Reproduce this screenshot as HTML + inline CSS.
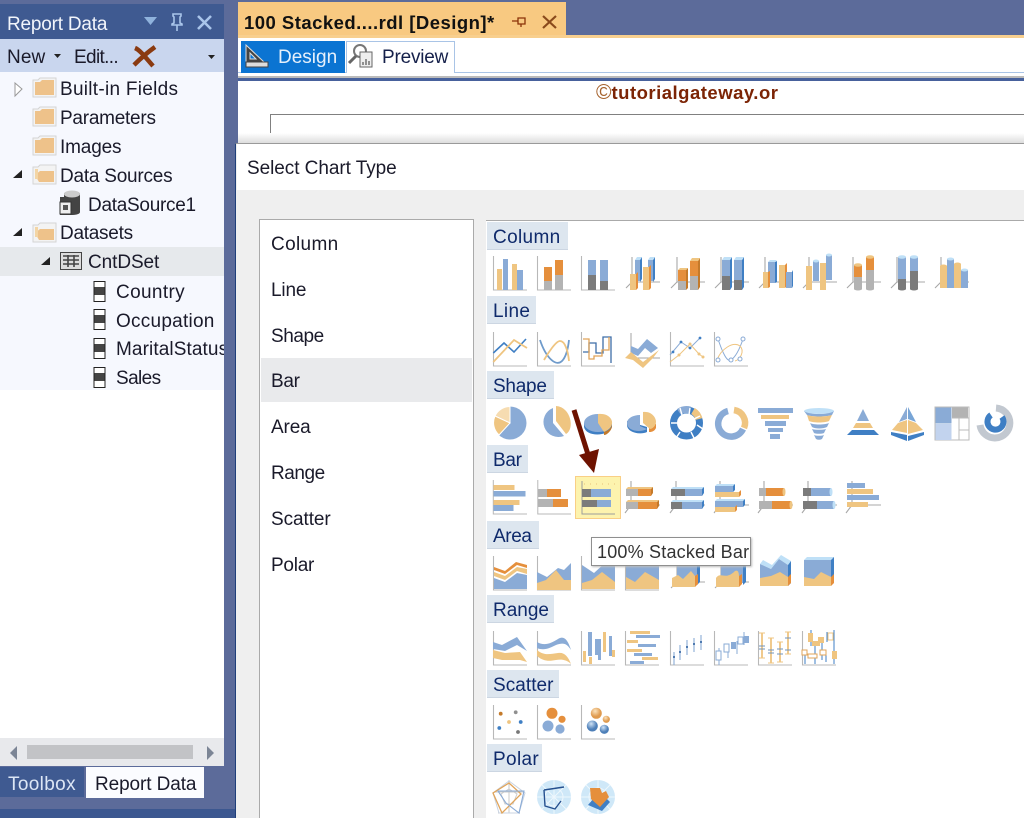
<!DOCTYPE html>
<html><head><meta charset="utf-8"><style>
html,body{margin:0;padding:0;width:1024px;height:818px;overflow:hidden;background:#5c6b9a}
body{position:relative;font-family:"Liberation Sans",sans-serif;font-size:19px;color:#1a1a2a}
.a{position:absolute}
.t{position:absolute;white-space:nowrap;line-height:24px;height:24px;letter-spacing:.35px}
.h{position:absolute;left:487px;height:28px;background:#dde6ef;color:#0f2a6b;line-height:31px;padding-left:6px;box-sizing:border-box;letter-spacing:.35px;border-bottom:1px solid #ccd6e2}
svg{position:absolute;left:0;top:0}
.o{fill:#efc581}.b{fill:#8aabd6}.O{fill:#e58f3c}.g{fill:#b3b3b3}.d{fill:#7b7b7b}.B{fill:#3f7fc4}.l{fill:#bfe0f7}.D{fill:#c47a2a}.G{fill:#8f8f8f}.k{fill:#555}
.s{fill:none}
</style></head><body>
<!-- left panel -->
<div class="a" style="left:0;top:4px;width:224px;height:35px;background:#3f5a91"></div>
<div class="a" style="left:0;top:39px;width:224px;height:33px;background:#c9d6ee"></div>
<div class="a" style="left:0;top:72px;width:224px;height:318px;background:#f6f8fe"></div>
<div class="a" style="left:0;top:390px;width:224px;height:348px;background:#fff"></div>
<div class="a" style="left:0;top:247px;width:224px;height:29px;background:#e6e9ec"></div>
<div class="a" style="left:0;top:738px;width:224px;height:28px;background:#e8e9ec"></div>
<div class="a" style="left:27px;top:745px;width:166px;height:14px;background:#c2c3c6"></div>
<div class="a" style="left:0;top:767px;width:84px;height:30px;background:#3f5a91"></div>
<div class="a" style="left:86px;top:767px;width:118px;height:31px;background:#fbfcff"></div>
<div class="a" style="left:0;top:809px;width:236px;height:9px;background:#3c5790"></div>
<div class="t" style="left:7px;top:13px;color:#f2f5fb;letter-spacing:-.2px">Report Data</div>
<div class="t" style="left:7px;top:46px;letter-spacing:.1px">New</div>
<div class="t" style="left:74px;top:46px;letter-spacing:-.65px">Edit...</div>
<div class="t" style="left:60px;top:78px;letter-spacing:.28px">Built-in Fields</div>
<div class="t" style="left:60px;top:107px;letter-spacing:-.25px">Parameters</div>
<div class="t" style="left:60px;top:136px;letter-spacing:-.15px">Images</div>
<div class="t" style="left:60px;top:165px;letter-spacing:-.23px">Data Sources</div>
<div class="t" style="left:88px;top:194px;letter-spacing:-.28px">DataSource1</div>
<div class="t" style="left:60px;top:222px;letter-spacing:-.27px">Datasets</div>
<div class="t" style="left:88px;top:251px;letter-spacing:-.08px">CntDSet</div>
<div class="t" style="left:116px;top:281px">Country</div>
<div class="t" style="left:116px;top:310px;letter-spacing:.25px">Occupation</div>
<div class="a" style="left:116px;top:338px;width:108px;height:24px;overflow:hidden"><div class="t" style="left:0;top:0;letter-spacing:.1px">MaritalStatus</div></div>
<div class="t" style="left:116px;top:367px;letter-spacing:-.6px">Sales</div>
<div class="t" style="left:8px;top:773px;color:#dce6f5">Toolbox</div>
<div class="t" style="left:95px;top:773px;letter-spacing:-.1px">Report Data</div>
<!-- doc area -->
<div class="a" style="left:238px;top:2px;width:328px;height:33px;background:#f8c981"></div>
<div class="a" style="left:238px;top:35px;width:786px;height:3px;background:#f8cf8e"></div>
<div class="a" style="left:238px;top:38px;width:786px;height:44px;background:#fff"></div>
<div class="a" style="left:238px;top:72px;width:786px;height:1px;background:#a9c4e6"></div>
<div class="a" style="left:238px;top:76px;width:786px;height:2px;background:#bbb"></div>
<div class="a" style="left:238px;top:78px;width:786px;height:3px;background:#47619c"></div>
<div class="a" style="left:238px;top:81px;width:786px;height:62px;background:#fff"></div>
<div class="a" style="left:270px;top:114px;width:754px;height:29px;box-sizing:border-box;border:1px solid #808080;border-right:0;border-bottom:0"></div>
<div class="a" style="left:238px;top:133px;width:786px;height:10px;background:linear-gradient(#fff,#ddd)"></div>
<div class="t" style="left:244px;top:11px;font-weight:bold;font-size:18.5px;color:#111;letter-spacing:.47px">100 Stacked....rdl [Design]*</div>
<div class="a" style="left:241px;top:41px;width:104px;height:32px;background:#0b74d2"></div>
<div class="a" style="left:346px;top:41px;width:109px;height:32px;box-sizing:border-box;border:1px solid #a9c4e6;border-bottom:0;background:#fff"></div>
<div class="t" style="left:278px;top:46px;color:#e6f0fb;letter-spacing:0">Design</div>
<div class="t" style="left:382px;top:46px;color:#15204a;letter-spacing:-.2px">Preview</div>
<div class="t" style="left:596px;top:81px;font-weight:bold;font-size:18.5px;color:#7c2405;letter-spacing:.5px"><span style="font-weight:normal;font-size:21px;color:#a5622d;letter-spacing:0">©</span>tutorialgateway.or</div>
<!-- dialog -->
<div class="a" style="left:235px;top:143px;width:789px;height:675px;background:#efefef;border-left:1px solid #1f3f7a;border-top:1px solid #9a9a9a;box-sizing:border-box"></div>
<div class="a" style="left:237px;top:144px;width:787px;height:46px;background:#fff"></div>
<div class="t" style="left:247px;top:157px;letter-spacing:-.06px">Select Chart Type</div>
<div class="a" style="left:259px;top:219px;width:215px;height:600px;box-sizing:border-box;background:#fff;border:1px solid #aaa"></div>
<div class="a" style="left:261px;top:358px;width:211px;height:44px;background:#e9eaec"></div>
<div class="t" style="left:271px;top:233px">Column</div>
<div class="t" style="left:271px;top:279px;letter-spacing:-.15px">Line</div>
<div class="t" style="left:271px;top:325px;letter-spacing:-.45px">Shape</div>
<div class="t" style="left:271px;top:370px;letter-spacing:-.3px">Bar</div>
<div class="t" style="left:271px;top:416px;letter-spacing:-.15px">Area</div>
<div class="t" style="left:271px;top:462px;letter-spacing:-.45px">Range</div>
<div class="t" style="left:271px;top:508px;letter-spacing:-.08px">Scatter</div>
<div class="t" style="left:271px;top:554px;letter-spacing:-.25px">Polar</div>
<div class="a" style="left:486px;top:220px;width:538px;height:598px;background:#fff;border-top:1px solid #aaa;box-sizing:border-box"></div>
<div class="h" style="top:222px;width:81px">Column</div>
<div class="h" style="top:296px;width:49px">Line</div>
<div class="h" style="top:371px;width:67px;letter-spacing:-.25px">Shape</div>
<div class="h" style="top:445px;width:41px;letter-spacing:-.3px">Bar</div>
<div class="h" style="top:521px;width:52px;letter-spacing:-.4px">Area</div>
<div class="h" style="top:595px;width:67px;letter-spacing:0">Range</div>
<div class="h" style="top:670px;width:72px;letter-spacing:.05px">Scatter</div>
<div class="h" style="top:744px;width:55px">Polar</div>
<div class="a" style="left:575px;top:476px;width:46px;height:43px;box-sizing:border-box;background:#fdf3ae;border:1px solid #f9cf86"></div>

<svg width="1024" height="818" viewBox="0 0 1024 818">
<defs>
<radialGradient id="gO" cx=".4" cy=".3"><stop offset="0" stop-color="#fbe3bd"/><stop offset="1" stop-color="#df9a4e"/></radialGradient>
<radialGradient id="gB" cx=".4" cy=".3"><stop offset="0" stop-color="#cfe2f5"/><stop offset="1" stop-color="#4d7fb8"/></radialGradient>
<path id="ax" d="M1.500 1V35H35" fill="none" stroke="#b8b8b8" stroke-width="1.100"/>
<path id="ax3" d="M8 2V27H36M8 27L2 33" fill="none" stroke="#a8a8a8" stroke-width="1.100"/>
<path id="axh" d="M7 1V25H36M7 25L1 33" fill="none" stroke="#a8a8a8" stroke-width="1.100"/>
<g id="folder"><path d="M1 3H6L8 1H24V20H1Z" fill="#f3f3f3" stroke="#d4d4d4"/><path d="M3 5H8L10 3H22V18H3Z" fill="#eec28a"/></g>
<g id="fold2"><path d="M1 3H6L8 1H24V20H1Z" fill="#f3f3f3" stroke="#d4d4d4"/><path d="M3 11L8 7H22V18H7Z" fill="#eec28a"/><path d="M3 5H6V15H3Z" fill="#f3d5a5"/></g>
<g id="fld"><rect x="0.500" y="0.500" width="11" height="20" fill="#fff" stroke="#222"/><rect x="1" y="6" width="10" height="8" fill="#444"/></g>
</defs>
<!-- left panel chrome icons -->
<path d="M144 17H157L150.500 25Z" fill="#8fb2dc"/>
<path d="M173 14H181V16L180 17V23L182 24V25H172V24L174 23V17L173 16ZM177 25V31" fill="none" stroke="#a9c5ea" stroke-width="1.600"/>
<path d="M198 16L211 29M211 16L198 29" stroke="#a9c5ea" stroke-width="2.600"/>
<path d="M54 54H61L57.500 58Z" fill="#222"/>
<path d="M208 55H215L211.500 59Z" fill="#222"/>
<path d="M135 48C140 50 146 58 153 66M155 47C148 52 141 58 134 65" stroke="#8a3a10" stroke-width="4.500" fill="none"/>
<path d="M15 83L22 89L15 96Z" fill="#fff" stroke="#999"/>
<use href="#folder" x="32" y="77"/><use href="#folder" x="32" y="106"/><use href="#folder" x="32" y="135"/><use href="#fold2" x="32" y="164"/><use href="#fold2" x="32" y="222"/>
<path d="M22 170V178H13Z" fill="#222"/><path d="M22 228V236H13Z" fill="#222"/><path d="M50 257V265H41Z" fill="#222"/>
<g><path d="M60 197H64V194C64 190 80 190 80 194V212C80 215 72 215 72 215H60Z" fill="#444"/><ellipse cx="72" cy="194" rx="8" ry="3.500" fill="#ccc"/><rect x="60" y="202" width="11" height="12" fill="#eee" stroke="#333"/><rect x="63" y="205" width="5" height="5" fill="#555"/></g>
<g><rect x="60.500" y="252.500" width="21" height="17" fill="#ddd" stroke="#444"/><path d="M63 256H79M63 260H79M63 264H79M68 255V267M74 255V267" stroke="#444" stroke-width="1.600"/></g>
<use href="#fld" x="93.500" y="281"/><use href="#fld" x="93.500" y="309"/><use href="#fld" x="93.500" y="338"/><use href="#fld" x="93.500" y="367"/>
<path d="M17 746V760L10 753Z" fill="#7c8595"/><path d="M207 746V760L214 753Z" fill="#7c8595"/>
<!-- doc tab icons -->
<path d="M512 21H518M518 18H525V24H518ZM521 24V27" fill="none" stroke="#8a3208" stroke-width="1.300"/>
<path d="M543 16L556 28M556 16L543 28" stroke="#8a4a1c" stroke-width="2.200"/>
<path d="M246 45V62H264ZM250 53V59H256Z" fill="#444" stroke="#ddd" fill-rule="evenodd"/><rect x="246" y="62" width="22" height="5" fill="#ddd" stroke="#444"/>
<circle cx="360" cy="51" r="6" fill="#fff" stroke="#777" stroke-width="2"/><path d="M356 56L349 63" stroke="#666" stroke-width="3"/><rect x="360" y="52" width="12" height="15" fill="#eee" stroke="#666"/><path d="M363 65V62M366 65V59M369 65V61" stroke="#333"/>

<!-- COLUMN ROW -->
<g transform="translate(492,255)"><use href="#ax"/><rect class="o" x="5" y="14" width="5" height="21"/><rect class="b" x="11" y="4" width="5" height="31"/><rect class="o" x="20" y="9" width="5" height="26"/><rect class="b" x="25" y="15" width="6" height="20"/></g>
<g transform="translate(536,255)"><use href="#ax"/><rect class="O" x="8" y="12" width="8" height="14"/><rect class="g" x="8" y="26" width="8" height="9"/><rect class="O" x="19" y="5" width="8" height="15"/><rect class="g" x="19" y="20" width="8" height="15"/></g>
<g transform="translate(580,255)"><use href="#ax"/><rect class="b" x="8" y="5" width="8" height="15"/><rect class="d" x="8" y="20" width="8" height="15"/><rect class="b" x="20" y="5" width="8" height="21"/><rect class="d" x="20" y="26" width="8" height="9"/></g>
<g transform="translate(624,255)"><use href="#ax3"/><rect class="b" x="11" y="5" width="5" height="21"/><path class="B" d="M16 5l2-3v22l-2 3z"/><path class="l" d="M11 5l2-3h5l-2 3z"/><rect class="b" x="24" y="5" width="5" height="21"/><path class="B" d="M29 5l2-3v22l-2 3z"/><path class="l" d="M24 5l2-3h5l-2 3z"/><rect class="o" x="6" y="19" width="6" height="16"/><path class="O" d="M12 19l2-2v16l-2 2z"/><rect class="o" x="19" y="12" width="6" height="23"/><path class="O" d="M25 12l2-2v23l-2 2z"/></g>
<g transform="translate(669,255)"><use href="#ax3"/><rect class="O" x="9" y="15" width="8" height="11"/><rect class="g" x="9" y="26" width="8" height="9"/><path class="D" d="M17 15l2-2v20l-2 2z"/><path class="o" d="M9 15l2-2h8l-2 2z"/><rect class="O" x="21" y="6" width="8" height="15"/><rect class="g" x="21" y="21" width="8" height="14"/><path class="D" d="M29 6l2-3v29l-2 3z"/><path class="o" d="M21 6l2-3h8l-2 3z"/></g>
<g transform="translate(713,255)"><use href="#ax3"/><rect class="b" x="9" y="5" width="8" height="16"/><rect class="d" x="9" y="21" width="8" height="14"/><path class="B" d="M17 5l2-3v30l-2 3z"/><path class="l" d="M9 5l2-3h8l-2 3z"/><rect class="b" x="21" y="5" width="8" height="20"/><rect class="d" x="21" y="25" width="8" height="10"/><path class="B" d="M29 5l2-3v30l-2 3z"/><path class="l" d="M21 5l2-3h8l-2 3z"/></g>
<g transform="translate(757,255)"><use href="#ax3"/><rect class="b" x="11" y="7" width="7" height="21"/><path class="B" d="M18 7l2-1v21l-2 1z"/><path class="l" d="M11 7l2-2h7l-2 2z"/><rect class="o" x="22" y="10" width="6" height="23"/><path class="O" d="M28 10l2-2v23l-2 2z"/><rect class="b" x="29" y="17" width="6" height="16"/><path class="B" d="M35 17l1-2v16l-1 2z"/><rect class="o" x="6" y="17" width="5" height="16"/><path class="O" d="M11 17l2-1v16l-2 1z"/></g>
<g transform="translate(801,255)"><use href="#ax3"/><rect class="b" x="12" y="6" width="6" height="20"/><ellipse class="l" cx="15" cy="6" rx="3" ry="1.500"/><rect class="b" x="25" y="0" width="6" height="25"/><ellipse class="l" cx="28" cy="0" rx="3" ry="1.500"/><rect class="o" x="5" y="11" width="6" height="24"/><rect class="o" x="19" y="8" width="6" height="27"/></g>
<g transform="translate(845,255)"><use href="#ax3"/><rect class="O" x="9" y="10" width="8" height="12"/><ellipse class="o" cx="13" cy="10" rx="4" ry="1.800"/><rect class="g" x="9" y="22" width="8" height="12"/><ellipse class="g" cx="13" cy="34" rx="4" ry="1.500"/><rect class="O" x="21" y="2" width="8" height="13"/><ellipse class="o" cx="25" cy="2" rx="4" ry="1.800"/><rect class="g" x="21" y="15" width="8" height="19"/><ellipse class="g" cx="25" cy="34" rx="4" ry="1.500"/></g>
<g transform="translate(889,255)"><use href="#ax3"/><rect class="b" x="9" y="2" width="8" height="22"/><ellipse class="l" cx="13" cy="2" rx="4" ry="1.800"/><rect class="d" x="9" y="24" width="8" height="10"/><ellipse class="d" cx="13" cy="34" rx="4" ry="1.500"/><rect class="b" x="21" y="2" width="8" height="14"/><ellipse class="l" cx="25" cy="2" rx="4" ry="1.800"/><rect class="d" x="21" y="16" width="8" height="18"/><ellipse class="d" cx="25" cy="34" rx="4" ry="1.500"/></g>
<g transform="translate(933,255)"><use href="#ax3"/><rect class="o" x="7" y="11" width="7" height="22"/><ellipse class="o" cx="10.500" cy="11" rx="3.500" ry="1.500"/><rect class="b" x="14" y="4" width="7" height="29"/><ellipse class="l" cx="17.500" cy="4" rx="3.500" ry="1.500"/><rect class="o" x="21" y="9" width="7" height="24"/><ellipse class="o" cx="24.500" cy="9" rx="3.500" ry="1.500"/><rect class="b" x="28" y="15" width="7" height="18"/><ellipse class="l" cx="31.500" cy="15" rx="3.500" ry="1.500"/></g>

<!-- LINE ROW -->
<g transform="translate(492,331)"><use href="#ax"/><path d="M1.300 22L12 12L22 21L34 8" fill="none" stroke="#3f7fc4" stroke-width="1.600"/><path d="M1.300 31L22 9L35 17" fill="none" stroke="#efc581" stroke-width="1.800"/></g>
<g transform="translate(536,331)"><use href="#ax"/><path d="M4 9C10 27 20 36 26 30C30 26 32 18 33 9" fill="none" stroke="#6f9bcb" stroke-width="1.800"/><path d="M8 29C12 22 20 10 24 10C29 10 32 20 33 30" fill="none" stroke="#efc581" stroke-width="1.800"/></g>
<g transform="translate(580,331)"><use href="#ax"/><path d="M3 21H9V12H16V22H23V6H31V32" fill="none" stroke="#3f6ea8" stroke-width="1.300"/><path d="M3 8H9V28H14V25H22V19H29V6" fill="none" stroke="#e0a45a" stroke-width="1.300"/></g>
<g transform="translate(624,331)"><path d="M7 2V27H36" fill="none" stroke="#a3a3a3"/><path class="b" d="M7 15L14 18L23 8L34 17L27 22L21 17L14 25L7 22Z"/><path class="o" d="M1 27L7 21L19 31L35 19L29 27L19 37L9 29Z"/></g>
<g transform="translate(669,331)"><use href="#ax"/><path d="M1 24L12 11L21 17L31 7" fill="none" stroke="#8aabd6"/><path d="M1 31L10 24L21 13L30 23L34 26" fill="none" stroke="#efc581"/><g class="B"><circle cx="12" cy="11" r="1.400"/><circle cx="21" cy="17" r="1.400"/><circle cx="31" cy="7" r="1.400"/><circle cx="4" cy="21" r="1.400"/></g><g class="o"><circle cx="10" cy="24" r="1.500"/><circle cx="21" cy="13" r="1.500"/><circle cx="30" cy="23" r="1.500"/><circle cx="34" cy="26" r="1.500"/></g></g>
<g transform="translate(713,331)"><use href="#ax"/><path d="M5 8C9 20 14 32 18 29C24 25 28 14 30 8" fill="none" stroke="#8aabd6"/><path d="M4 29C8 18 20 10 27 15C32 20 27 29 22 30" fill="none" stroke="#efc581"/><g fill="#fff" stroke="#8aabd6"><circle cx="5" cy="8" r="2"/><circle cx="30" cy="8" r="2"/><circle cx="18" cy="29" r="2"/><circle cx="5" cy="29" r="2"/><circle cx="27" cy="28" r="2"/></g></g>

<!-- SHAPE ROW -->
<g transform="translate(492,405)"><circle class="b" cx="18" cy="18" r="16.500"/><path d="M18 18L18 1.500A16.500 16.500 0 0 0 3 11Z" fill="#f6dcb1" stroke="#fff"/><path d="M18 18L3 11A16.500 16.500 0 0 0 7 30Z" class="o" stroke="#fff"/></g>
<g transform="translate(536,405)"><path class="b" d="M17 18L17 3A15 15 0 1 0 28 31Z"/><path class="o" d="M20 16V1C35 2 39 24 30 29Z"/></g>
<g transform="translate(580,405)"><path class="B" d="M4 18V22C6 32 28 32 32 22V18Z"/><ellipse class="b" cx="18" cy="18" rx="14" ry="9"/><path class="o" d="M18 18V9C28 8 33 14 32 19C31 24 26 26 24 27Z"/><path class="D" d="M24 27C28 26 32 23 32 19V22C31 26 27 30 24 30Z"/></g>
<g transform="translate(624,405)"><path class="B" d="M3 16V20C3 28 17 30 23 27V22Z"/><path class="b" d="M16 10V21L23 24C16 28 3 26 3 18C3 13 10 10 16 10Z"/><path class="O" d="M19 9V13L32 19V23C30 27 27 27 25 27V22Z"/><path class="o" d="M19 7C27 6 32 12 32 17C32 21 28 24 26 24L19 18Z"/></g>
<g transform="translate(669,405)"><circle cx="17.500" cy="18" r="13" fill="none" stroke="#3f7fc4" stroke-width="7"/><path d="M10 7A13 13 0 0 1 21 5" fill="none" stroke="#8aabd6" stroke-width="7"/><path d="M24 6A13 13 0 0 1 30 14" fill="none" stroke="#efc581" stroke-width="7"/><path d="M2 18H9M28 20L34 24M11 27L7 33M22 27L25 33M11 3L13 10M21 3L20 10M31 11L25 14" stroke="#fff" stroke-width="1.400"/></g>
<g transform="translate(713,405)"><path d="M15 6A13 13 0 1 0 30 24" fill="none" stroke="#8aabd6" stroke-width="6.500"/><path d="M21 5A13 13 0 0 1 31 23" fill="none" stroke="#efc581" stroke-width="6.500"/></g>
<g transform="translate(757,405)"><rect class="b" x="1" y="3" width="35" height="5"/><rect class="o" x="4" y="10" width="28" height="4"/><rect class="b" x="8" y="16" width="21" height="5"/><rect class="b" x="11" y="23" width="15" height="4"/><rect class="b" x="13" y="29" width="10" height="5"/></g>
<g transform="translate(801,405)"><ellipse class="l" cx="18" cy="6" rx="15" ry="3"/><path class="b" d="M3 6C8 10 28 10 33 6L31 10C26 12 10 12 6 10Z"/><path class="o" d="M6 10C10 12 26 12 31 10L28 16C24 18 12 18 8 16Z"/><path class="b" d="M9 18C12 20 24 20 28 18L26 22C22 24 14 24 11 22ZM11 24C14 25 22 25 25 24L23 28C21 29 15 29 13 28ZM13 30C15 31 21 31 23 30L21 34C19 35 17 35 15 34Z"/></g>
<g transform="translate(845,405)"><path class="b" d="M18 4L24 16H12Z"/><path class="o" d="M11 18H25L28 23H8Z"/><path class="B" d="M7 25H29L34 30H2Z"/></g>
<g transform="translate(889,405)"><path class="b" d="M18 2V14L10 17Z"/><path class="B" opacity=".7" d="M19 2L27 17L19 14Z"/><path class="o" d="M9 18L18 15V28L3 25ZM19 15L27 18L34 25L19 29Z"/><path class="B" d="M2 27L18 30V36L2 30ZM19 31L35 27V30L19 36Z"/></g>
<g transform="translate(933,405)"><rect x="2" y="2" width="34" height="33" fill="#fff" stroke="#bbb"/><rect class="b" x="2.500" y="2.500" width="16" height="16"/><rect class="g" x="19" y="2.500" width="16" height="10"/><rect x="2.500" y="19" width="16" height="16" fill="#c2d3ee"/><path d="M19 13H36M26 13V35M26 25H36" stroke="#bbb" fill="none"/></g>
<g transform="translate(977,405)"><path d="M19 3A15 15 0 1 1 3 20" fill="none" stroke="#c2c8d0" stroke-width="7"/><path d="M14 10A8 8 0 1 0 25 12" fill="none" stroke="#3f7fc4" stroke-width="6"/></g>

<!-- BAR ROW -->
<g transform="translate(492,480)"><path d="M1.300 0V34H35" fill="none" stroke="#b8b8b8"/><rect class="o" x="1.500" y="5" width="21" height="5"/><rect class="b" x="1.500" y="11" width="32" height="5.500"/><rect class="o" x="1.500" y="20" width="26" height="5"/><rect class="b" x="1.500" y="25" width="20" height="6"/></g>
<g transform="translate(536,480)"><path d="M1.800 0V34H35" fill="none" stroke="#b8b8b8"/><rect class="g" x="2" y="9" width="9" height="8"/><rect class="O" x="11" y="9" width="14" height="8"/><rect class="g" x="2" y="19" width="15" height="8"/><rect class="O" x="17" y="19" width="15" height="8"/></g>
<g transform="translate(580,480)"><path d="M2 1V34H35" fill="none" stroke="#9c9c9c"/><rect class="d" x="2" y="9" width="9" height="8"/><rect class="b" x="11" y="9" width="20" height="8"/><rect class="d" x="2" y="20" width="15" height="7"/><rect class="b" x="17" y="20" width="14" height="7"/><path d="M4 4H38" stroke="#e8c27a" stroke-dasharray="1 5"/></g>
<g transform="translate(624,480)"><use href="#axh"/><rect class="g" x="2" y="9" width="12" height="7"/><rect class="O" x="14" y="9" width="13" height="7"/><path class="o" d="M2 9l2-2h25l-2 2z"/><path class="D" d="M27 9l2-2v6l-2 3z"/><rect class="g" x="2" y="22" width="12" height="7"/><rect class="O" x="14" y="22" width="19" height="7"/><path class="o" d="M2 22l2-2h31l-2 2z"/><path class="D" d="M33 22l2-2v6l-2 3z"/></g>
<g transform="translate(669,480)"><use href="#axh"/><rect class="d" x="2" y="9" width="14" height="7"/><rect class="b" x="16" y="9" width="17" height="7"/><path class="l" d="M2 9l2-2h31l-2 2z"/><path class="B" d="M33 9l2-2v6l-2 3z"/><rect class="d" x="2" y="22" width="11" height="7"/><rect class="b" x="13" y="22" width="20" height="7"/><path class="l" d="M2 22l2-2h31l-2 2z"/><path class="B" d="M33 22l2-2v6l-2 3z"/></g>
<g transform="translate(713,480)"><use href="#axh"/><rect class="b" x="2" y="6" width="18" height="6"/><path class="l" d="M2 6l2-2h18l-2 2z"/><path class="B" d="M20 6l2-2v6l-2 2z"/><rect class="o" x="2" y="12" width="24" height="5"/><path class="O" d="M26 12l2-2v5l-2 2z"/><rect class="b" x="2" y="21" width="28" height="6"/><path class="l" d="M2 21l2-2h28l-2 2z"/><path class="B" d="M30 21l2-2v6l-2 2z"/><rect class="o" x="2" y="27" width="20" height="5"/><path class="O" d="M22 27l2-2v5l-2 2z"/></g>
<g transform="translate(757,480)"><use href="#axh"/><rect class="g" x="2" y="8" width="7" height="8"/><rect class="O" x="9" y="8" width="18" height="8"/><ellipse class="o" cx="27" cy="12" rx="1.500" ry="4"/><rect class="g" x="2" y="21" width="13" height="8"/><rect class="O" x="15" y="21" width="19" height="8"/><ellipse class="o" cx="34" cy="25" rx="1.500" ry="4"/></g>
<g transform="translate(801,480)"><use href="#axh"/><rect class="b" x="2" y="8" width="24" height="8" transform="translate(4,0)"/><rect class="d" x="2" y="8" width="8" height="8"/><ellipse class="l" cx="30" cy="12" rx="1.500" ry="4"/><rect class="d" x="2" y="21" width="14" height="8"/><rect class="b" x="16" y="21" width="17" height="8"/><ellipse class="l" cx="33" cy="25" rx="1.500" ry="4"/></g>
<g transform="translate(845,480)"><use href="#axh"/><rect class="b" x="2" y="3" width="18" height="5"/><rect class="o" x="2" y="9" width="26" height="5"/><rect class="b" x="2" y="15" width="32" height="5"/><rect class="o" x="2" y="22" width="21" height="5"/></g>

<!-- AREA ROW -->
<g transform="translate(492,555)"><use href="#ax"/><path class="b" d="M2 23L13 27L25 18L35 20V34H2Z"/><path class="o" d="M2 17L13 21L25 12L35 14V19L25 16L13 25L2 21Z"/><path class="O" d="M2 12L13 16L24 7L35 10V13L25 10L13 19L2 15Z"/></g>
<g transform="translate(536,555)"><use href="#ax"/><path class="b" d="M1 17L11 22L22 13L28 15L35 8V30H1Z"/><path class="o" d="M1 28L10 25L20 15L28 25L35 25V35H1Z"/></g>
<g transform="translate(580,555)"><use href="#ax"/><path class="b" d="M2 10L14 18L25 8H35V30H2Z"/><path class="o" d="M2 28L12 25L22 17L35 27V34H2Z"/></g>
<g transform="translate(624,555)"><use href="#ax"/><path class="b" d="M2 8H35V30H2Z"/><path class="o" d="M2 22L11 27L21 17L35 25V34H2Z"/></g>
<g transform="translate(669,555)"><use href="#ax3"/><path class="b" d="M8 4H28V28H8Z"/><path class="B" d="M28 4l3-2v25l-3 3z"/><path class="o" d="M3 23L9 20L14 24L22 16L26 21V32H3Z"/><path class="O" d="M26 21l3-2v10l-3 3z"/></g>
<g transform="translate(713,555)"><use href="#ax3"/><path class="b" d="M8 4H30V28H8Z"/><path class="B" d="M30 4l3-2v25l-3 3z"/><path class="o" d="M3 23C8 16 12 26 22 16C26 14 26 20 26 22V32H3Z"/><path class="O" d="M26 21l3-2v10l-3 3z"/></g>
<g transform="translate(757,555)"><path class="l" d="M3 9L14 14L22 4L31 10L34 6L24 0L15 10L6 5Z"/><path class="b" d="M3 9L14 14L22 4L31 10V31H3Z"/><path class="B" d="M31 10L34 6V28L31 31Z"/><path class="o" d="M3 23L14 21L23 17L31 22V31H3Z"/><path class="O" d="M31 22L34 19V28L31 31Z"/></g>
<g transform="translate(801,555)"><path class="l" d="M3 5L6 2H33L30 5Z"/><path class="b" d="M3 5H30V31H3Z"/><path class="B" d="M30 5l3-3v24l-3 3z"/><path class="o" d="M3 22L13 24L20 17L30 22V31H3Z"/><path class="O" d="M30 22l3-3v9l-3 3z"/></g>

<!-- RANGE ROW -->
<g transform="translate(492,630)"><use href="#ax"/><path class="b" d="M1 12L10 15L25 7L35 21L25 15L13 21L1 19Z"/><path class="o" d="M1 20L13 23L28 22L35 32L28 30L10 30L1 28Z"/></g>
<g transform="translate(536,630)"><use href="#ax"/><path class="b" d="M1 12C8 16 14 14 22 9C28 5 32 10 35 20C31 14 28 12 20 15C14 18 8 21 1 18Z"/><path class="o" d="M1 20C8 26 14 24 22 23C28 22 32 26 35 34C31 30 26 29 20 30C14 31 8 32 1 26Z"/></g>
<g transform="translate(580,630)"><use href="#ax"/><rect class="b" x="8" y="2" width="4" height="24"/><rect class="b" x="18" y="9" width="3" height="21"/><rect class="o" x="3" y="21" width="3" height="11"/><rect class="o" x="9" y="27" width="3" height="7"/><rect class="b" x="15" y="9" width="3" height="16"/><rect class="o" x="23" y="2" width="3" height="20"/><rect class="b" x="29" y="6" width="3" height="20"/><rect class="o" x="32" y="20" width="3" height="7"/></g>
<g transform="translate(624,630)"><use href="#ax"/><rect class="o" x="6" y="1" width="20" height="3"/><rect class="b" x="12" y="5" width="24" height="3"/><rect class="o" x="3" y="10" width="11" height="3"/><rect class="b" x="14" y="14" width="18" height="3"/><rect class="o" x="3" y="19" width="15" height="3"/><rect class="b" x="10" y="23" width="18" height="3"/><rect class="o" x="18" y="27" width="16" height="3"/><rect class="b" x="6" y="31" width="14" height="3"/></g>
<g transform="translate(669,630)"><use href="#ax"/><path d="M5 22V35M11 15V30M18 10V25M25 8V22M32 5V20" stroke="#8aabd6" stroke-width="1.100"/><path d="M4 27H6M10 22H12M17 17H19M24 14H26M31 12H33" stroke="#3f6ea8" stroke-width="1.800"/></g>
<g transform="translate(713,630)"><use href="#ax"/><path d="M6 18V35M15 14V28M24 11V24M31 2V15" stroke="#8aabd6"/><rect x="3" y="21" width="5" height="9" fill="#fff" stroke="#8aabd6"/><rect x="11" y="14" width="5" height="8" fill="#fff" stroke="#8aabd6"/><rect class="b" x="18" y="12" width="5" height="7"/><rect x="25" y="7" width="5" height="7" fill="#fff" stroke="#8aabd6"/><rect class="b" x="31" y="6" width="5" height="7"/></g>
<g transform="translate(757,630)"><use href="#ax"/><path d="M5 3V28M14 8V33M23 12V32M31 2V24" stroke="#efc581" stroke-width="1.800"/><path d="M2 3H8M2 28H8M11 8H17M11 33H17M20 12H26M20 32H26M28 2H34M28 24H34" stroke="#efc581"/><path d="M2 16H8M2 19H8M11 20H17M11 23H17M20 19H26M20 24H26M28 8H34M28 20H34" stroke="#6f93bd"/></g>
<g transform="translate(801,630)"><use href="#ax"/><path d="M10 0V16M4 20V34M14 16V34M26 2V12M33 0V22M21 13V30M25 22V32M33 22V34" stroke="#3f7fc4"/><rect class="o" x="7" y="3" width="5" height="9"/><rect class="o" x="11" y="11" width="8" height="5"/><rect class="o" x="17" y="7" width="6" height="6"/><rect x="27" y="3" width="5" height="7" fill="#fff" stroke="#efc581"/><rect x="1" y="20" width="5" height="5" fill="#fff" stroke="#e0a45a"/><rect x="7" y="24" width="9" height="4" fill="#fff" stroke="#e0a45a"/><rect x="19" y="20" width="6" height="5" fill="#fff" stroke="#e0a45a"/><rect class="o" x="31" y="21" width="5" height="8"/></g>

<!-- SCATTER ROW -->
<g transform="translate(492,704)"><use href="#ax"/><circle class="D" cx="8.700" cy="9.700" r="1.900"/><circle class="G" cx="23.700" cy="8.300" r="1.900"/><circle class="o" cx="17" cy="18" r="1.900"/><circle class="B" cx="28.700" cy="18" r="1.900"/><circle class="B" cx="7.300" cy="24" r="1.900"/><circle cx="26" cy="28" r="1.900" fill="#777"/></g>
<g transform="translate(536,704)"><use href="#ax"/><circle class="O" cx="16" cy="9.300" r="5.500"/><circle class="O" cx="26" cy="15.300" r="3.600"/><circle class="b" cx="12" cy="22" r="5.500"/><circle class="b" cx="24" cy="25" r="4.600"/></g>
<g transform="translate(580,704)"><use href="#ax"/><circle fill="url(#gO)" cx="16.300" cy="9.300" r="5.500"/><circle fill="url(#gO)" cx="26.300" cy="15.300" r="3.600"/><circle fill="url(#gB)" cx="12.300" cy="22" r="5.500"/><circle fill="url(#gB)" cx="24.300" cy="25.300" r="4.600"/></g>

<!-- POLAR ROW -->
<g transform="translate(492,780)"><path d="M17 0V33M2 12L32 12M6 33L28 33" stroke="#c8c8c8" fill="none"/><path d="M17 1L33 13L27 33H7L1 13Z" fill="none" stroke="#c8d3e2"/><path d="M17 9L25 14L21 24H13L9 14Z" fill="none" stroke="#ccc"/><path d="M17 3L29 14L10 33L1 13Z" fill="none" stroke="#e0a45a" stroke-width="1.300"/><path d="M6 11L32 11L27 33L14 23Z" fill="none" stroke="#8aabd6" stroke-width="1.100"/></g>
<g transform="translate(536,780)"><circle cx="18" cy="17" r="17" fill="#cfe8f8"/><path d="M18 0V34M1 17H35M6 5L30 29M30 5L6 29" stroke="#eef7fd"/><circle cx="18" cy="17" r="9" fill="none" stroke="#eef7fd"/><path d="M8 10L28 7M8 10L9 26L19 29L25 21" fill="none" stroke="#25508f" stroke-width="1.400"/></g>
<g transform="translate(580,780)"><circle cx="18" cy="17" r="17" fill="#cfe8f8"/><path d="M18 0V34M1 17H35M6 5L30 29M30 5L6 29" stroke="#eef7fd"/><circle cx="18" cy="17" r="9" fill="none" stroke="#eef7fd"/><path class="B" d="M8 25L14 18L26 18L30 22L22 31Z"/><path class="O" d="M10 8H20L22 13L26 11L29 17L20 27L11 19Z"/></g>

<!-- arrow -->
<path d="M574 410L588.500 456" stroke="#6e1200" stroke-width="5"/>
<path d="M579 455L599 449L594 473Z" fill="#6e1200"/>
</svg>
<div class="a" style="left:591px;top:537px;width:160px;height:29px;box-sizing:border-box;background:#fff;border:1px solid #8f8f8f;box-shadow:1px 1px 2px #bbb;line-height:29px;padding-left:5px;font-size:18px;letter-spacing:.2px;color:#333;white-space:nowrap">100% Stacked Bar</div>
</body></html>
